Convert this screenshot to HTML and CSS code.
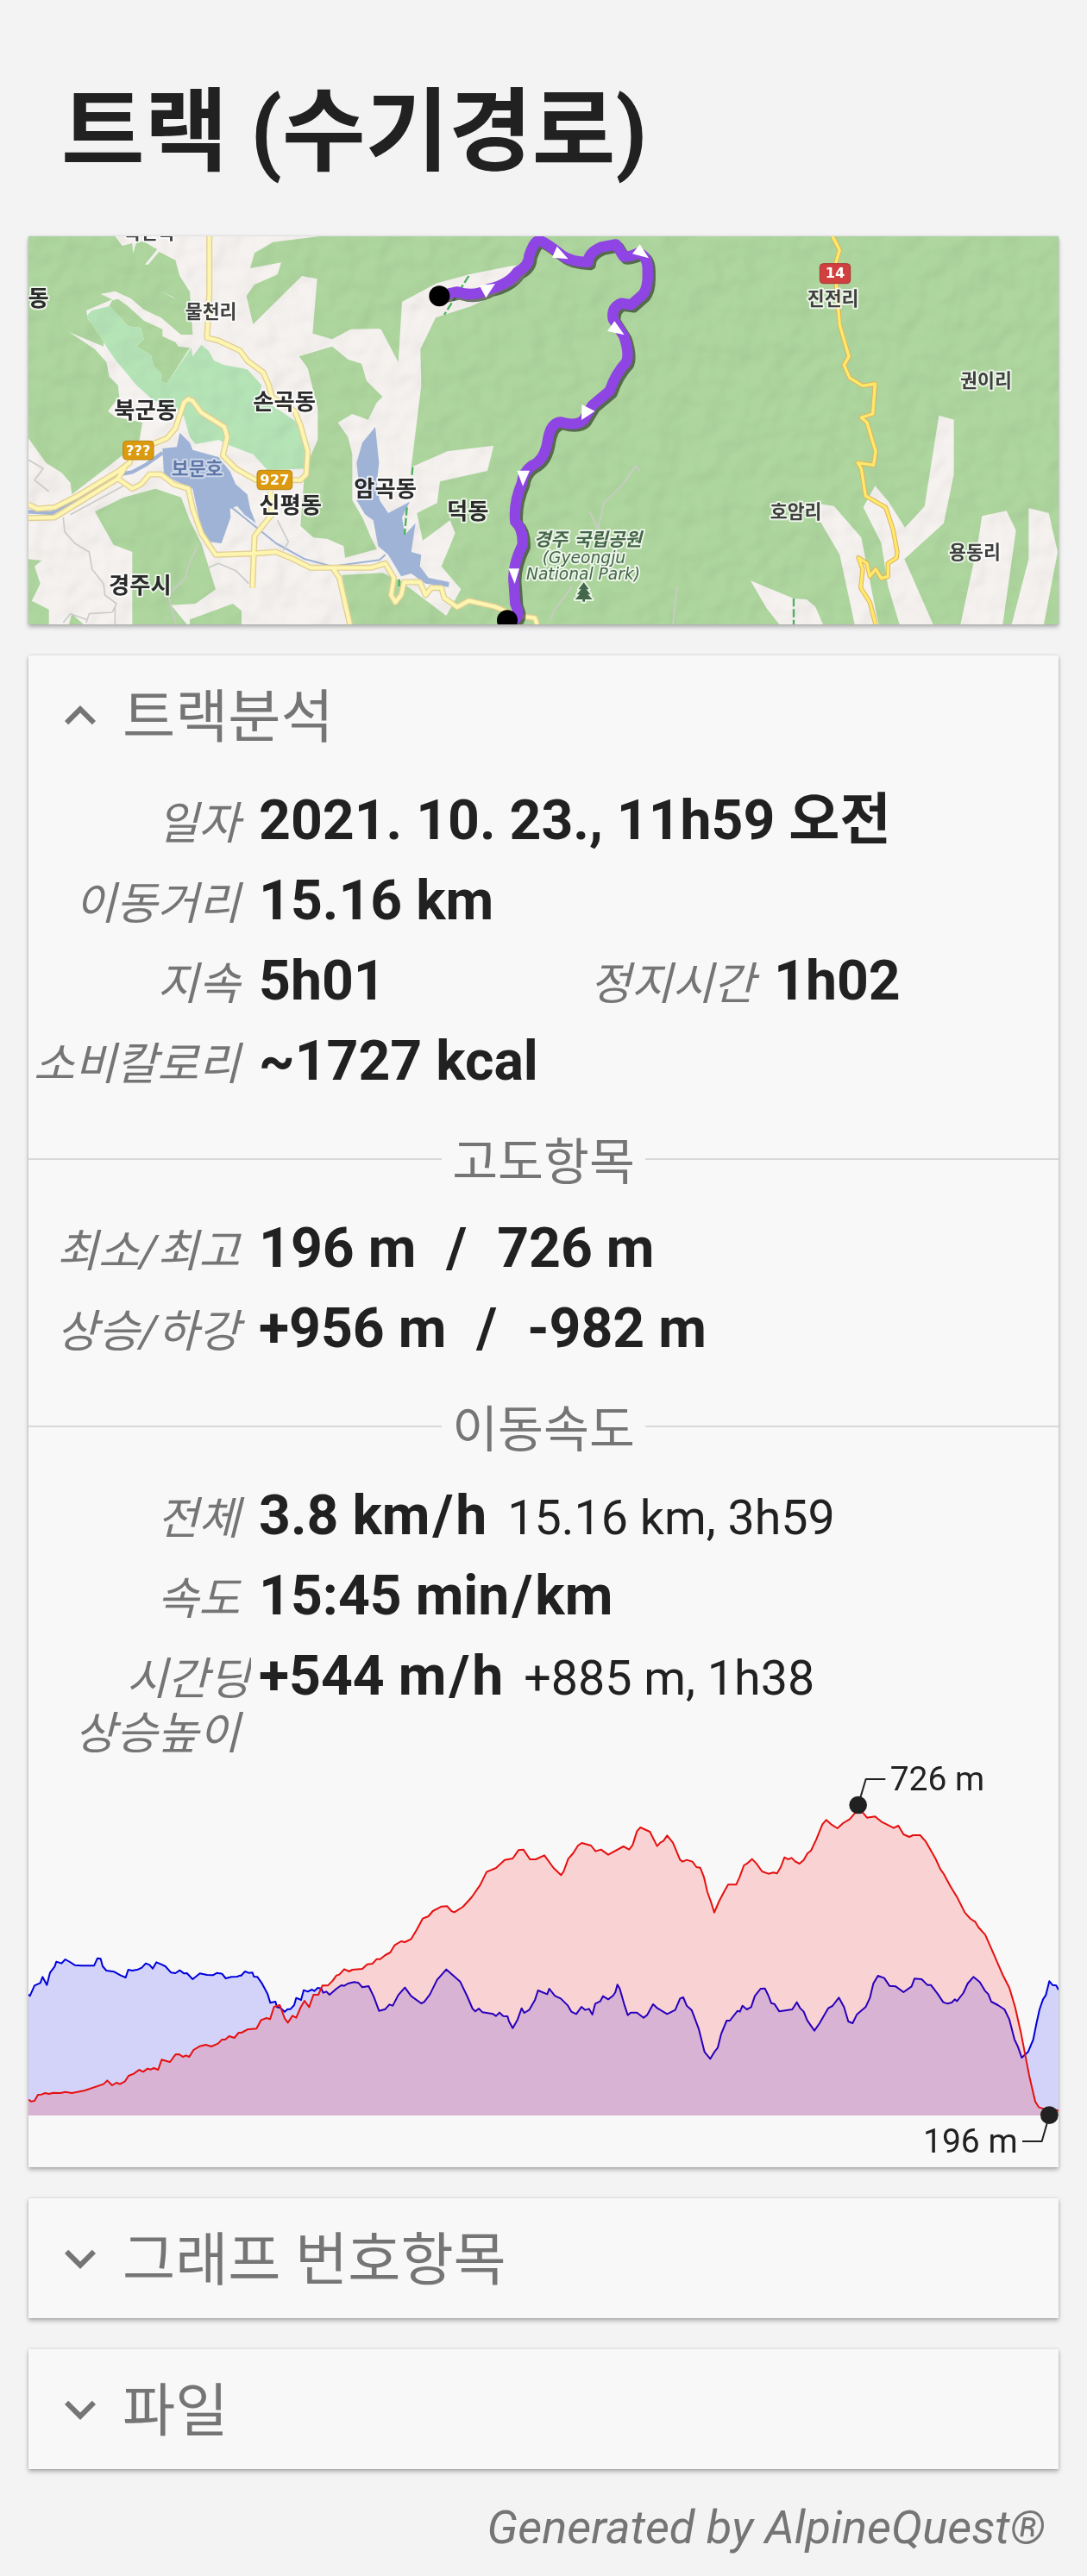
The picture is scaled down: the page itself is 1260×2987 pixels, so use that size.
FILE: index.html
```html
<!DOCTYPE html>
<html lang="ko">
<head>
  <meta charset="UTF-8">
  <meta name="viewport" content="width=device-width, initial-scale=1.0">
  <title>트랙 (수기경로)</title>
  <link rel="stylesheet" href="styles.css">
</head>
<body>
  <h1>트랙 (수기경로)</h1>

  <div class="card map">
    <svg viewBox="39 42 3582 1350">
      <defs>
        <filter id="relief" x="0" y="0" width="100%" height="100%">
          <feTurbulence type="fractalNoise" baseFrequency="0.011" numOctaves="2" seed="8"/>
          <feDiffuseLighting surfaceScale="22" lighting-color="#fff" result="light">
            <feDistantLight azimuth="225" elevation="60"/>
          </feDiffuseLighting>
        </filter>
      </defs>

      <rect class="forest" x="39" y="42" width="3582" height="1350"/>

      <!-- open land, west -->
      <path class="land" d="M39 42H1260V1392H39z"/>
      <path class="land" d="M1225 365H1265L1325 480 1338 270 1460 205 1570 175 1720 145 1790 140 1750 200 1630 260 1580 285 1455 325 1402 435 1405 560 1370 845 1495 790 1657 770 1635 858 1470 895 1460 970 1390 1005 1410 1100 1505 1030 1523 1075 1475 1190 1543 1270 1492 1362 1360 1290 1320 1240 1225 1210z"/>
      <path class="forest" d="M39 42H340L365 75 400 66 402 102 415 62 440 60 487 88 443 140 456 140 493 96 550 125 565 180 600 235 610 385 570 385 505 345 545 255 500 233 585 280 560 360 450 308 380 255 340 235 290 243 330 262 240 300 245 330 300 395 300 425 180 375 270 435 310 480 320 530 350 560 355 600 315 650 340 670 435 690 425 750 370 800 300 855 190 940 185 900 155 865 100 830 39 745z"/>
      <path class="land" d="M290 243L340 233 395 258 440 297 500 325 570 385H612V425L580 420 505 390 500 360 455 338 420 318 380 275 345 255z"/>
      <path class="forest" d="M330 265L350 260 385 285 440 335 505 365 505 390 550 410 560 425 600 430 520 555 500 545V520L475 495 465 455 415 425 440 400 430 360 385 355 345 310 320 285z"/>
      <path class="forest" d="M810 153L825 100 890 62 1050 42H1275V363L1160 365 1095 400 1027 380 1043 190 990 180 820 348 797 250 825 210 905 175 918 133z"/>
      <path class="forest" d="M980 460L1095 425 1150 470 1197 485 1215 545 1270 600 1250 620 1220 680 1165 660 1115 690 1150 740 1165 800V960L1200 1020 1230 1090 1250 1130 1140 1160 1135 1120 1080 1095 1030 1090 985 1050 1000 850 1045 750V640L1010 500z"/>
      <path class="forest" d="M1130 1220L1270 1213 1330 1240 1492 1362V1392H1155z"/>
      <path class="forest" d="M270 1000L370 950 480 920 570 950 600 1030 640 1110 690 1270 620 1320 535 1325 590 1392H400V1140L335 1115z"/>
      <path class="forest" d="M600 1375L750 1320 780 1345V1392H600z"/>
      <path class="forest" d="M39 1165L85 1170 60 1190 80 1250 50 1310 110 1340V1392H39zM180 1392L190 1355 230 1392z"/>
      <path class="park" d="M240 320L260 300 320 285 345 310 385 355 430 360 440 400 415 425 465 455 475 495 500 520V545L520 555 605 430 610 460 640 420 665 440 685 475 720 490 800 505 850 560 840 600 900 640 975 690 1000 770 1010 850 870 855 820 800 740 770 700 750 620 765 600 740 580 670 560 645 470 610 415 560 340 470 300 410z"/>

      <!-- open land, east -->
      <g transform="translate(2430)">
        <path class="land" d="M120 1240L270 1302 315 1305 345 1330 372 1392H220L175 1335z"/>
        <path class="land" d="M355 972L410 980 505 1090 515 1140 565 1392H482L430 1150 360 1030z"/>
        <path class="land" d="M553 910L600 965 657 1055 725 982 775 665 827 680V870L792 1040 655 1165 755 1392H638L598 1260 575 1110 512 985z"/>
        <path class="land" d="M925 1015L1010 997 1043 1065 997 1392H850L910 1110z"/>
        <path class="land" d="M1087 987L1157 1005 1188 1140 1140 1392H1028L1087 1165z"/>
      </g>

      <rect class="relief" x="39" y="42" width="3582" height="1350" filter="url(#relief)"/>

      <!-- water -->
      <path class="water" d="M505 780L555 775 565 725 600 760 610 785 700 810 740 860 760 905 800 940 810 990 830 1040 790 1010 765 980 740 990 742 1020 710 1110 670 1105 640 1060 610 920 545 890 510 870z"/>
      <path class="water" d="M1245 705L1200 760 1180 830 1190 920 1180 960 1210 1010 1238 1030 1255 1120 1290 1150 1335 1225 1370 1215 1420 1250 1500 1262 1502 1245 1430 1230 1400 1190 1405 1150 1370 1140 1385 1040 1348 1080 1338 1020 1365 965 1290 1005 1260 960 1250 900 1258 830z"/>
      <path class="river" d="M39 1000L120 1005 350 872 400 862 450 835 505 795"/>
      <path class="river thin" d="M745 985L900 1110 1000 1165 1095 1190 1260 1168 1280 1150"/>

      <!-- paths -->
      <path class="trail" d="M160 1020L165 1070 200 1110 250 1140 260 1200 300 1250 305 1290 345 1320 330 1350 250 1355 240 1385M160 1385L185 1355 240 1375M340 1330V1392M185 1010L370 910M905 1030L943 1105 925 1135M665 1195L700 1180 760 1205 805 1250M630 1110L595 1190 585 1230 525 1290 550 1385M39 820L90 850 60 890 110 930M1990 1000L2020 1060 2040 970 2110 900 2150 840 2165 860M1850 1380L1870 1340 1930 1260M2295 1260L2280 1392"/>
      <path class="border" d="M1570 180L1485 315M1375 845L1370 900M1355 985L1347 1080M1328 1235V1260M2700 1302V1392"/>

      <!-- roads -->
      <g>
        <path class="road-edge" d="M668 42V240L660 395 700 405 775 440 800 475 855 515 875 560 885 600 965 650 985 700 1010 790 1005 870 985 890H830L760 850 715 805 730 740 720 705 640 655 610 615 595 608 580 620 550 710 520 745 470 765M39 975L70 990 130 985 210 945 350 860 390 830 400 800M39 1022L130 1020 350 885 400 920 430 905 460 870H500L545 905 595 920 610 990 640 1075 690 1150 830 1145 900 1140 960 1165 1020 1195H1230L1280 1180 1310 1230 1300 1290 1315 1315 1335 1290 1345 1245H1400L1420 1290 1440 1265H1475L1485 1300 1530 1332 1570 1310 1660 1330 1730 1360 1800 1370 1808 1392M880 930L885 1010 825 1085 818 1265M350 885L375 845M1100 1200L1120 1230 1157 1392"/>
        <path class="road" d="M668 42V240L660 395 700 405 775 440 800 475 855 515 875 560 885 600 965 650 985 700 1010 790 1005 870 985 890H830L760 850 715 805 730 740 720 705 640 655 610 615 595 608 580 620 550 710 520 745 470 765M39 975L70 990 130 985 210 945 350 860 390 830 400 800M39 1022L130 1020 350 885 400 920 430 905 460 870H500L545 905 595 920 610 990 640 1075 690 1150 830 1145 900 1140 960 1165 1020 1195H1230L1280 1180 1310 1230 1300 1290 1315 1315 1335 1290 1345 1245H1400L1420 1290 1440 1265H1475L1485 1300 1530 1332 1570 1310 1660 1330 1730 1360 1800 1370 1808 1392M880 930L885 1010 825 1085 818 1265M350 885L375 845M1100 1200L1120 1230 1157 1392"/>
      </g>
      <g transform="translate(2430)">
        <path class="main-edge" d="M405 42L430 90 415 140 418 210 430 350 462 460 445 490 465 535 510 562 553 555 545 660 505 672 525 690 555 790 548 838 493 830 505 850 520 945 590 985 615 1060 630 1140 628 1160 598 1180V1225L575 1232 555 1200 535 1225 525 1180 495 1160 510 1200 503 1265 535 1315 555 1392"/>
        <path class="main" d="M405 42L430 90 415 140 418 210 430 350 462 460 445 490 465 535 510 562 553 555 545 660 505 672 525 690 555 790 548 838 493 830 505 850 520 945 590 985 615 1060 630 1140 628 1160 598 1180V1225L575 1232 555 1200 535 1225 525 1180 495 1160 510 1200 503 1265 535 1315 555 1392"/>
      </g>

      <!-- names -->
      <g class="town">
        <text x="74" y="284">동</text>
        <text x="446" y="676">북군동</text>
        <text x="929" y="646">손곡동</text>
        <text x="950" y="1004">신평동</text>
        <text x="427" y="1283">경주시</text>
        <text x="1280" y="947">암곡동</text>
        <text x="1567" y="1027">덕동</text>
      </g>
      <g class="village">
        <text x="460" y="50">북안곡</text>
        <text x="674" y="328">물천리</text>
        <text x="2837" y="281">진전리</text>
        <text x="3369" y="567">권이리</text>
        <text x="2708" y="1024">호암리</text>
        <text x="3330" y="1163">용동리</text>
      </g>
      <text class="lake" x="626" y="872">보문호</text>
      <g class="reserve">
        <text class="korean" x="1984" y="1118">경주 국립공원</text>
        <text x="1971" y="1180">(Gyeongju</text>
        <text x="1968" y="1236">National Park)</text>
        <path d="M1970 1246l-18 24h9l-14 18h9l-16 17h26v8h8v-8h26l-16-17h9l-14-18h9z"/>
      </g>
      <g class="shield">
        <rect x="368" y="754" width="106" height="65" rx="12"/>
        <text x="421" y="803">???</text>
        <rect x="834" y="856" width="122" height="67" rx="12"/>
        <text x="895" y="905">927</text>
      </g>
      <g class="shield red">
        <rect x="2791" y="137" width="106" height="69" rx="12"/>
        <text x="2844" y="187">14</text>
      </g>

      <!-- recorded track -->
      <g transform="translate(1230)">
        <path class="track-shadow" d="M240 248L300 235Q360 255 410 225 480 210 510 165 550 145 550 110 570 50 590 58 610 65 660 105 690 130 755 132 755 100 800 80L852 70 878 112Q900 115 930 100 965 110 962 165 965 220 945 245L905 280 870 275Q835 290 842 330L880 390Q900 450 888 480 850 520 830 580L770 630 740 680Q715 705 660 688 625 690 615 750 605 820 560 840 530 860 525 900 495 970 502 1035 530 1060 527 1115 490 1190 497 1250L502 1320Q520 1360 500 1375L475 1378"/>
        <path class="track" d="M240 248L300 235Q360 255 410 225 480 210 510 165 550 145 550 110 570 50 590 58 610 65 660 105 690 130 755 132 755 100 800 80L852 70 878 112Q900 115 930 100 965 110 962 165 965 220 945 245L905 280 870 275Q835 290 842 330L880 390Q900 450 888 480 850 520 830 580L770 630 740 680Q715 705 660 688 625 690 615 750 605 820 560 840 530 860 525 900 495 970 502 1035 530 1060 527 1115 490 1190 497 1250L502 1320Q520 1360 500 1375L475 1378"/>
        <path class="arrow" d="M377 213L432 207 400 256zM647 77L686 121 630 116zM935 70L966 118 909 103zM847 337L881 385 822 372zM733 627L779 650 732 681zM508 857H552L528 911zM478 1198H516L500 1251z"/>
        <circle cx="238" cy="250" r="36"/>
        <circle cx="474" cy="1378" r="36"/>
      </g>
    </svg>
  </div>

  <div class="card">
    <div class="card-title">
      <svg class="chevron" viewBox="0 0 24 24"><path d="M12 8l-6 6 1.41 1.41L12 10.83l4.59 4.58L18 14z"/></svg>
      <h2>트랙분석</h2>
    </div>
    <div class="rows">
      <div class="row"><span class="label">일자</span><b>2021. 10. 23., 11h59 오전</b></div>
      <div class="row"><span class="label">이동거리</span><b>15.16 km</b></div>
      <div class="row split">
        <div class="row"><span class="label">지속</span><b>5h01</b></div>
        <div class="row"><span class="label">정지시간</span><b>1h02</b></div>
      </div>
      <div class="row"><span class="label">소비칼로리</span><b>~1727 kcal</b></div>
    </div>

    <h3>고도항목</h3>
    <div class="rows">
      <div class="row"><span class="label">최소/최고</span><b>196 m&nbsp; <span class="slash">/</span> &nbsp;726 m</b></div>
      <div class="row"><span class="label">상승/하강</span><b>+956 m&nbsp; <span class="slash">/</span> &nbsp;-982 m</b></div>
    </div>

    <h3>이동속도</h3>
    <div class="rows">
      <div class="row"><span class="label">전체</span><b>3.8 km<span class="slash">/</span>h</b><span class="detail">15.16 km, 3h59</span></div>
      <div class="row"><span class="label">속도</span><b>15:45 min<span class="slash">/</span>km</b></div>
      <div class="row tall"><span class="label"><span class="hang">시간딩</span><br>상승높이</span><b>+544 m<span class="slash">/</span>h</b><span class="detail">+885 m, 1h38</span></div>
    </div>

    <svg class="chart" viewBox="39 0 3582 1419">
      <path id="speedArea" class="speed-area"/>
      <path id="speedLine" class="speed-line"/>
      <path id="elevationArea" class="elevation-area"/>
      <path id="elevationLine" class="elevation-line"/>
      <path class="leader" d="M2924 160L2951 69H3019M3589 1238L3563 1329H3495"/>
      <circle class="dot" cx="2924" cy="159" r="31"/>
      <circle class="dot" cx="3589" cy="1238" r="31"/>
      <text x="3035" y="107">726 m</text>
      <text x="3479" y="1368" text-anchor="end">196 m</text>
    </svg>
  </div>

  <div class="card">
    <div class="card-title">
      <svg class="chevron" viewBox="0 0 24 24"><path d="M16.59 8.59L12 13.17 7.41 8.59 6 10l6 6 6-6z"/></svg>
      <h2>그래프 번호항목</h2>
    </div>
  </div>

  <div class="card">
    <div class="card-title">
      <svg class="chevron" viewBox="0 0 24 24"><path d="M16.59 8.59L12 13.17 7.41 8.59 6 10l6 6 6-6z"/></svg>
      <h2>파일</h2>
    </div>
  </div>

  <footer>Generated by AlpineQuest®</footer>

  <script>
    const elevation = '39,1184 48,1190 60,1188 72,1167 84,1166 97,1161 110,1164 125,1160 150,1161 168,1157 190,1161 235,1152 300,1130 313,1117 330,1134 345,1125 357,1130 375,1120 387,1101 405,1094 424,1080 438,1087 453,1076 465,1079 475,1074 490,1080 502,1045 531,1053 550,1027 563,1026 576,1035 587,1030 598,1035 613,1011 635,998 655,993 675,999 698,989 712,975 723,975 737,963 755,969 770,951 780,951 800,940 832,937 848,907 867,900 879,904 893,861 913,855 930,901 941,916 957,892 970,899 985,864 999,840 1015,862 1030,819 1047,819 1061,787 1080,787 1097,770 1110,752 1120,749 1137,730 1154,738 1165,732 1200,729 1217,713 1235,711 1250,695 1262,695 1280,681 1297,672 1312,647 1335,633 1348,636 1370,625 1388,595 1410,554 1430,546 1445,528 1475,512 1495,511 1510,528 1520,532 1550,513 1580,480 1610,437 1632,392 1665,378 1695,350 1723,345 1743,316 1760,314 1783,348 1803,348 1833,334 1865,378 1891,403 1900,390 1916,346 1933,327 1950,300 1963,291 1995,300 2011,320 2030,314 2055,332 2108,303 2128,314 2140,298 2155,250 2167,237 2200,252 2225,302 2237,289 2247,284 2260,265 2280,290 2305,350 2314,356 2328,350 2348,356 2362,375 2375,377 2388,410 2400,462 2412,495 2424,533 2440,495 2460,457 2472,436 2500,436 2512,410 2527,369 2540,361 2555,347 2570,362 2590,390 2612,398 2630,394 2642,397 2655,375 2668,341 2680,348 2693,343 2705,355 2720,363 2735,350 2748,327 2760,318 2778,280 2800,226 2813,211 2830,226 2852,240 2872,222 2895,208 2915,185 2940,185 2955,203 2983,199 3005,217 3048,239 3064,231 3082,261 3102,270 3115,264 3140,264 3160,287 3193,345 3210,382 3222,399 3245,442 3268,479 3295,533 3315,555 3331,565 3343,585 3366,610 3395,676 3427,750 3450,795 3470,862 3490,950 3520,1105 3540,1190 3552,1210 3570,1216 3621,1222';
    const speed = '39,818 44,823 60,787 80,778 88,757 103,785 114,742 130,721 136,704 154,710 167,696 183,705 200,716 225,718 267,718 279,692 290,694 297,720 310,735 337,739 360,752 377,759 386,732 400,735 420,731 433,725 447,710 460,715 471,728 484,706 500,713 515,720 535,742 550,744 565,734 580,745 590,744 610,765 635,745 660,750 680,751 695,743 712,746 725,762 745,757 765,756 775,752 778,753 792,738 805,743 818,742 823,756 835,757 850,778 870,815 880,847 898,843 903,862 915,865 930,878 940,869 950,869 963,855 970,830 987,837 996,803 1010,808 1025,801 1033,806 1045,795 1057,797 1064,812 1075,808 1086,819 1110,798 1127,786 1137,788 1150,780 1172,775 1187,778 1200,793 1222,789 1240,826 1258,875 1280,869 1294,853 1306,857 1325,820 1348,794 1370,824 1405,849 1415,844 1435,818 1460,767 1492,731 1540,773 1565,825 1583,867 1593,877 1605,867 1618,880 1655,886 1665,893 1677,881 1690,893 1705,894 1710,911 1723,935 1740,905 1754,866 1763,882 1780,872 1800,838 1811,804 1843,817 1850,798 1870,823 1890,832 1915,857 1927,878 1944,886 1962,861 1975,872 1988,868 2000,888 2010,850 2027,842 2037,824 2055,835 2072,822 2080,810 2087,784 2095,797 2110,850 2123,890 2133,881 2155,881 2178,899 2190,890 2211,852 2225,865 2260,886 2288,872 2305,832 2316,828 2328,857 2345,872 2370,938 2390,1018 2410,1042 2425,1017 2436,1003 2448,955 2467,909 2478,909 2485,900 2505,875 2513,878 2522,857 2537,870 2552,862 2565,823 2585,798 2600,797 2612,822 2622,848 2633,851 2650,877 2695,870 2711,845 2722,865 2735,878 2747,908 2772,944 2790,918 2820,866 2835,858 2857,829 2875,862 2890,912 2905,918 2920,887 2950,862 2965,830 2977,780 2993,753 3015,761 3033,788 3055,790 3082,810 3110,790 3120,763 3145,765 3165,785 3177,785 3200,815 3220,845 3235,850 3250,846 3260,835 3268,841 3290,813 3305,780 3325,757 3347,775 3365,805 3377,817 3387,843 3410,855 3433,870 3450,905 3468,975 3480,1000 3493,1038 3515,1018 3533,975 3545,915 3555,870 3567,835 3577,820 3589,772 3600,785 3613,787 3621,802';

    function draw(name, points) {
      document.getElementById(name + 'Line').setAttribute('d', 'M' + points);
      document.getElementById(name + 'Area').setAttribute('d', 'M39,1239 L' + points + ' V1239 Z');
    }

    draw('speed', speed);
    draw('elevation', elevation);
  </script>
</body>
</html>
```
FILE: styles.css
```css
* {
  margin: 0;
  padding: 0;
  box-sizing: border-box;
}

body {
  background: #f3f3f3;
  color: #212121;
  font-family: Roboto, "Noto Sans CJK KR", sans-serif;
  padding: 0 33px;
}

h1 {
  height: 274px;
  padding: 0 38px;
  font-size: 105px;
  font-weight: 700;
  line-height: 308px;
}

.card {
  background: #f8f8f8;
  margin-bottom: 36px;
  box-shadow: 0 3px 5px rgba(0, 0, 0, 0.28), 0 0 3px rgba(0, 0, 0, 0.12);
}

.card svg {
  display: block;
}

.card-title {
  display: flex;
  align-items: center;
  height: 139px;
  padding-left: 24px;
  color: #757575;
}

.card-title h2 {
  margin-left: 13px;
  padding-top: 5px;
  font-size: 66.5px;
  font-weight: 400;
  line-height: 134px;
}

.chevron {
  width: 72px;
  height: 72px;
  fill: #757575;
}

.rows {
  font-size: 64.3px;
  line-height: 93px;
}

.card-title + .rows {
  margin-top: 6px;
}

.row {
  display: flex;
  align-items: baseline;
  height: 93px;
  white-space: nowrap;
}

.row.tall {
  height: 143px;
}

.split > .row {
  width: 50%;
}

.label {
  width: 258px;
  margin-right: 9px;
  padding-right: 13px;
  color: #757575;
  font-size: 52px;
  font-style: italic;
  line-height: 63px;
  text-align: right;
  overflow: clip;
}

.hang {
  margin-right: -12px;
}

.slash {
  padding: 0 3px;
}

.detail {
  margin-left: 24px;
  font-size: 55.6px;
}

h3 {
  display: flex;
  align-items: center;
  height: 124px;
  padding-top: 7px;
  color: #757575;
  font-size: 57.5px;
  font-weight: 400;
}

h3::before,
h3::after {
  content: "";
  flex: 1;
  height: 2px;
  margin-top: 3px;
  background: #d9d9d9;
}

h3::before {
  margin-right: 12px;
}

h3::after {
  margin-left: 12px;
}

footer {
  padding-right: 15px;
  color: #757575;
  font-size: 54.3px;
  font-style: italic;
  line-height: 63px;
  text-align: right;
}

/* Map */
.map,
.map svg {
  height: 450px;
  width: 100%;
}

.forest { fill: #aed69e; }
.land { fill: #f5f2f0; }
.park { fill: #b5e4b7; }
.water { fill: #9fb3d6; }

.relief {
  mix-blend-mode: multiply;
  opacity: 0.16;
}

.river,
.trail,
.border,
.road,
.road-edge,
.main,
.main-edge,
.track,
.track-shadow {
  fill: none;
  stroke-linejoin: round;
}

.river { stroke: #9fb3d6; stroke-width: 13; }
.river.thin { stroke-width: 6; }
.trail { stroke: #cbcbc8; stroke-width: 5; }
.border { stroke: #4cb25a; stroke-width: 7; stroke-dasharray: 28 9; }
.road-edge { stroke: #e2cf95; stroke-width: 21; }
.road { stroke: #fdf5b0; stroke-width: 13; }
.main-edge { stroke: #dfb35c; stroke-width: 16; }
.main { stroke: #ffe96b; stroke-width: 10; }

.town,
.village,
.lake,
.reserve {
  font-family: "Noto Sans CJK KR", sans-serif;
  font-size: 79px;
  font-weight: 700;
  text-anchor: middle;
  fill: #2a2a2a;
  stroke: rgba(255, 255, 255, 0.75);
  stroke-width: 12;
  stroke-linejoin: round;
  paint-order: stroke;
}

.village { font-size: 65px; fill: #404040; }
.lake { font-size: 65px; fill: #6078a8; stroke: rgba(255, 255, 255, 0.45); }

.reserve {
  font-family: "DejaVu Sans", "Noto Sans CJK KR", sans-serif;
  font-size: 56px;
  font-style: italic;
  font-weight: 400;
  fill: #44664a;
}

.reserve .korean {
  font-size: 64px;
  font-weight: 700;
}

.shield rect {
  fill: #dc9a0e;
  stroke: #b98212;
  stroke-width: 3;
}

.shield text {
  font: bold 49px "DejaVu Sans", sans-serif;
  text-anchor: middle;
  fill: #fff;
}

.shield.red rect { fill: #d23f3f; stroke: #a83434; }

.track { stroke: #8f44e4; stroke-width: 37; }

.track-shadow {
  stroke: rgba(40, 50, 35, 0.65);
  stroke-width: 37;
  transform: translate(9px, 9px);
}

.arrow { fill: #fff; }

/* Elevation and speed chart */
.chart {
  width: 100%;
  height: 473px;
}

.chart text {
  font-size: 117px;
  fill: #212121;
}

.elevation-area { fill: rgba(255, 0, 0, 0.15); }
.speed-area { fill: rgba(0, 0, 255, 0.15); }

.elevation-line,
.speed-line,
.leader {
  fill: none;
  stroke-width: 6;
  stroke-linejoin: round;
}

.elevation-line { stroke: #e60f0f; }
.speed-line { stroke: #0000dc; }
.leader { stroke: #212121; }
.dot { fill: #212121; }
```
